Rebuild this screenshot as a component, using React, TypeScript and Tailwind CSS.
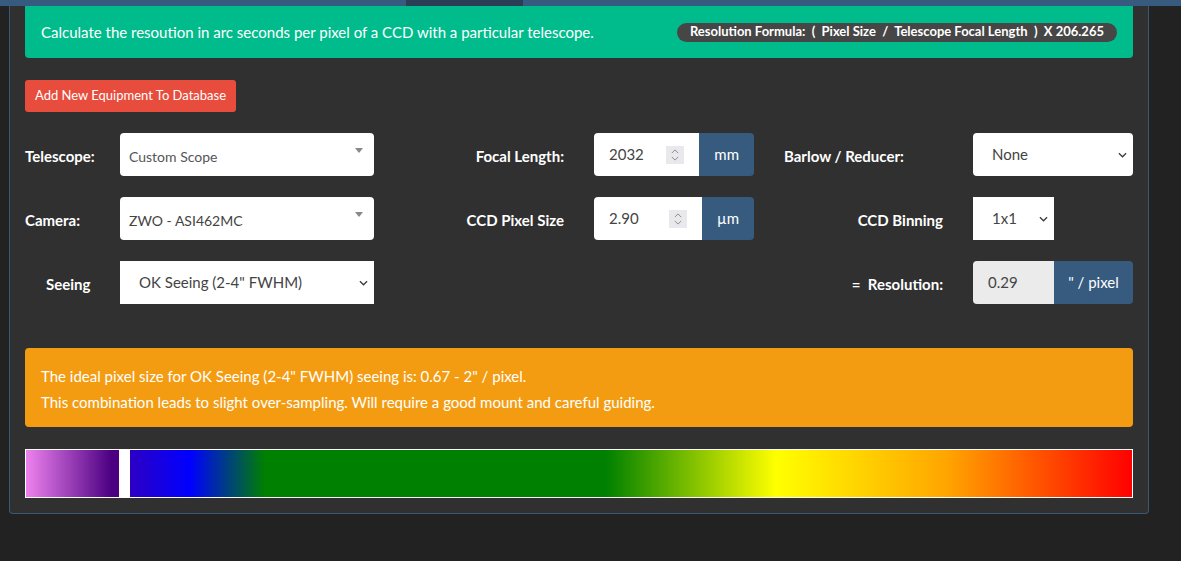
import React from 'react';

const Caret = () => (
  <span className="absolute right-[11px] top-[15px] w-0 h-0 border-l-[4px] border-r-[4px] border-t-[5px] border-l-transparent border-r-transparent border-t-[#888]" />
);

const Chevron = () => (
  <svg viewBox="0 0 10 6" className="w-[9px] h-[6px]" fill="none" stroke="#3a3a3a" strokeWidth="1.4">
    <path d="M1 1l4 4 4-4" />
  </svg>
);

const Spinner = () => (
  <div className="w-[18px] h-[18px] bg-[#e9e9ed] flex flex-col items-center justify-center gap-[2px]">
    <svg viewBox="0 0 10 6" className="w-[8px] h-[5px]" fill="none" stroke="#8a8a8a" strokeWidth="1.2">
      <path d="M1 5l4-4 4 4" />
    </svg>
    <svg viewBox="0 0 10 6" className="w-[8px] h-[5px]" fill="none" stroke="#8a8a8a" strokeWidth="1.2">
      <path d="M1 1l4 4 4-4" />
    </svg>
  </div>
);

function Select2({ text, dark }: { text: string; dark?: boolean }) {
  return (
    <div className="relative w-[254px] h-full bg-white rounded-[4px] flex items-center pl-[9px] pt-[3px]">
      <span className={dark ? 'text-[14px] text-[#444]' : 'text-[14px] text-[#555]'}>{text}</span>
      <Caret />
    </div>
  );
}

function NativeSelect({ text, width, rounded }: { text: string; width: string; rounded?: boolean }) {
  return (
    <div className={`${width} ${rounded ? 'rounded-[4px]' : ''} h-full bg-white flex items-center justify-between pl-[19px] pr-[6px] text-[15px] text-[#444]`}>
      <span>{text}</span>
      <Chevron />
    </div>
  );
}

function InputGroup({ value, unit }: { value: string; unit: string }) {
  return (
    <div className="w-[160px] h-full flex">
      <div className="flex-1 bg-white rounded-l-[4px] flex items-center justify-between pl-[15px] pr-[15px] text-[15px] text-[#444]">
        <span>{value}</span>
        <Spinner />
      </div>
      <div className="bg-[#375a7f] rounded-r-[4px] px-[15px] flex items-center text-[15px] text-white">{unit}</div>
    </div>
  );
}

export default function App() {
  return (
    <div className="min-h-screen h-[561px] bg-[#222222] font-[Lato,'Liberation_Sans',sans-serif] text-white">
      <div className="h-[6px] bg-[#375a7f] flex">
        <div className="ml-[406px] w-[117px] bg-[#2a3f56]" />
      </div>

      <div className="ml-[9px] w-[1140px] bg-[#303030] border-x border-b border-[#3b5878] rounded-b-[4px] px-[15px] pb-[15px]">
        <div className="h-[52px] bg-[#00bc8c] rounded-b-[4px] flex items-center justify-between pl-4 pr-[16px]">
          <span className="text-[15px] text-white">Calculate the resoution in arc seconds per pixel of a CCD with a particular telescope.</span>
          <span className="h-[19px] bg-[#464646] rounded-full px-[13px] flex items-center text-[13px] font-bold whitespace-pre text-white">
            {'Resolution Formula:  (  Pixel Size  /  Telescope Focal Length  )  X 206.265'}
          </span>
        </div>

        <button className="mt-[22px] h-[32px] bg-[#e74c3c] rounded-[3px] px-[10px] text-[13px] text-white">
          Add New Equipment To Database
        </button>

        <div className="mt-[21px] flex flex-col gap-[21px] text-[15px]">
          <div className="flex h-[43px] items-center">
            <div className="w-[95px] font-bold pt-[3px]">Telescope:</div>
            <Select2 text="Custom Scope" />
            <div className="w-[220px] pr-[30px] text-right font-bold pt-[3px]">Focal Length:</div>
            <InputGroup value="2032" unit="mm" />
            <div className="w-[219px] pl-[30px] font-bold pt-[3px]">Barlow / Reducer:</div>
            <NativeSelect text="None" width="w-[160px]" rounded />
          </div>

          <div className="flex h-[43px] items-center">
            <div className="w-[95px] font-bold pt-[3px]">Camera:</div>
            <Select2 text="ZWO - ASI462MC" dark />
            <div className="w-[220px] pr-[30px] text-right font-bold pt-[3px]">CCD Pixel Size</div>
            <InputGroup value="2.90" unit="µm" />
            <div className="w-[219px] pr-[30px] text-right font-bold pt-[3px]">CCD Binning</div>
            <NativeSelect text="1x1" width="w-[81px]" />
          </div>

          <div className="flex h-[43px] items-center">
            <div className="w-[95px] pl-[21px] font-bold pt-[3px]">Seeing</div>
            <NativeSelect text={'OK Seeing (2-4" FWHM)'} width="w-[254px]" />
            <div className="w-[599px] pr-[30px] text-right font-bold whitespace-pre pt-[3px]">{'=  Resolution:'}</div>
            <div className="w-[160px] h-full flex">
              <div className="w-[81px] bg-[#ebebeb] rounded-l-[4px] flex items-center pl-[15px] text-[#444]">0.29</div>
              <div className="flex-1 bg-[#375a7f] rounded-r-[4px] flex items-center justify-center">" / pixel</div>
            </div>
          </div>
        </div>

        <div className="mt-[44px] bg-[#f39c12] rounded-[4px] pl-4 pr-4 pt-[15px] pb-[12px] text-[15px] leading-[26px] text-white">
          <p>The ideal pixel size for OK Seeing (2-4" FWHM) seeing is: 0.67 - 2" / pixel.</p>
          <p>This combination leads to slight over-sampling. Will require a good mount and careful guiding.</p>
        </div>

        <div className="mt-[22px] h-[49px] border border-white bg-white flex gap-[11px]">
          <div className="w-[93px] bg-[linear-gradient(to_right,#ee82ee,#4b0082_92%)]" />
          <div className="flex-1 bg-[linear-gradient(to_right,#2d00c4,#0000ff_6%,#008000_13.5%,#008000_47.5%,#ffff00_64.5%,#ffa500_81.5%,#ff0000)]" />
        </div>
      </div>
    </div>
  );
}
